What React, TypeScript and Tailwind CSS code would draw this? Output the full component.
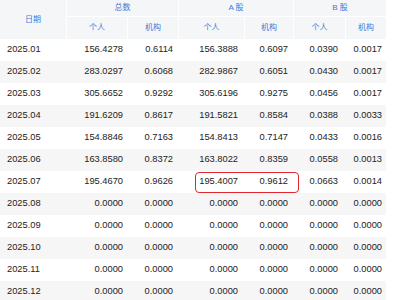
import React from "react";

const rows: [string, string, string, string, string, string, string][] = [
  ["2025.01", "156.4278", "0.6114", "156.3888", "0.6097", "0.0390", "0.0017"],
  ["2025.02", "283.0297", "0.6068", "282.9867", "0.6051", "0.0430", "0.0017"],
  ["2025.03", "305.6652", "0.9292", "305.6196", "0.9275", "0.0456", "0.0017"],
  ["2025.04", "191.6209", "0.8617", "191.5821", "0.8584", "0.0388", "0.0033"],
  ["2025.05", "154.8846", "0.7163", "154.8413", "0.7147", "0.0433", "0.0016"],
  ["2025.06", "163.8580", "0.8372", "163.8022", "0.8359", "0.0558", "0.0013"],
  ["2025.07", "195.4670", "0.9626", "195.4007", "0.9612", "0.0663", "0.0014"],
  ["2025.08", "0.0000", "0.0000", "0.0000", "0.0000", "0.0000", "0.0000"],
  ["2025.09", "0.0000", "0.0000", "0.0000", "0.0000", "0.0000", "0.0000"],
  ["2025.10", "0.0000", "0.0000", "0.0000", "0.0000", "0.0000", "0.0000"],
  ["2025.11", "0.0000", "0.0000", "0.0000", "0.0000", "0.0000", "0.0000"],
  ["2025.12", "0.0000", "0.0000", "0.0000", "0.0000", "0.0000", "0.0000"],
];

const font = { fontFamily: '"Liberation Sans", "Noto Sans CJK SC", sans-serif' };

export default function App() {
  const hc = "bg-[#f5f6f8] flex items-center justify-center text-[#3b78d8] text-[8px]";
  return (
    <div className="w-[400px] h-[300px] bg-white overflow-hidden" style={font}>
      <div className="w-[386px]">
        <div className="grid grid-cols-[66px_60px_50px_65px_48px_51px_40px] grid-rows-[16px_22px] gap-px bg-white">
          <div className={`${hc} row-span-2`}>日期</div>
          <div className={`${hc} col-span-2`}>总数</div>
          <div className={`${hc} col-span-2`}>A 股</div>
          <div className={`${hc} col-span-2`}>B 股</div>
          <div className={hc}>个人</div>
          <div className={hc}>机构</div>
          <div className={hc}>个人</div>
          <div className={hc}>机构</div>
          <div className={hc}>个人</div>
          <div className={hc}>机构</div>
        </div>
        {rows.map((r, i) => (
          <div
            key={r[0]}
            className={`relative grid grid-cols-[66px_61px_51px_66px_49px_52px_41px] h-[22px] items-center text-[9.3px] text-[#222222] ${
              i % 2 === 1 ? "bg-[#f6f6f6]" : "bg-white"
            }`}
          >
            <div className="pl-[7px]">{r[0]}</div>
            <div className="text-right pr-[4px]">{r[1]}</div>
            <div className="text-right pr-[5px]">{r[2]}</div>
            <div className="text-right pr-[6px]">{r[3]}</div>
            <div className="text-right pr-[5px]">{r[4]}</div>
            <div className="text-right pr-[7px]">{r[5]}</div>
            <div className="text-right pr-[4px]">{r[6]}</div>
            {r[0] === "2025.07" && (
              <div className="absolute left-[195px] top-[1px] w-[104px] h-[21px] border-[1.5px] border-[#e3262d] rounded-[4px]" />
            )}
          </div>
        ))}
      </div>
    </div>
  );
}
